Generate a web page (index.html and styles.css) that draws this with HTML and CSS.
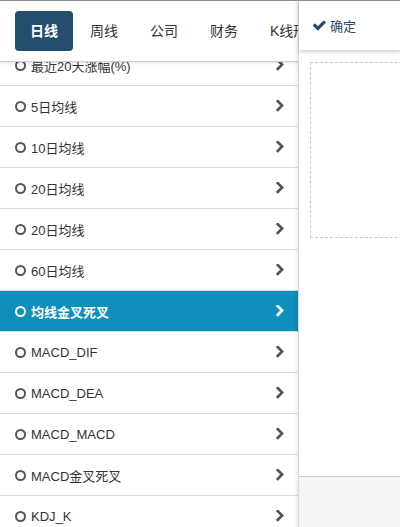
FILE: index.html
```html
<!DOCTYPE html>
<html lang="zh">
<head>
<meta charset="utf-8">
<link rel="stylesheet" href="styles.css">
</head>
<body>
<div class="page">
  <div class="tabbar">
    <div class="tab active">日线</div>
    <div class="tab">周线</div>
    <div class="tab">公司</div>
    <div class="tab">财务</div>
    <div class="tab">K线形态</div>
  </div>
  <div class="listwrap">
    <ul class="list">
      <li class="row"><span class="ring"></span><span class="label">最近20天涨幅(%)</span><svg class="chev" viewBox="340 150 1060 1500"><path d="M1363 877l-742 742q-19 19-45 19t-45-19l-166-166q-19-19-19-45t19-45l531-531-531-531q-19-19-19-45t19-45l166-166q19-19 45-19t45 19l742 742q19 19 19 45t-19 45z"/></svg></li>
      <li class="row"><span class="ring"></span><span class="label">5日均线</span><svg class="chev" viewBox="340 150 1060 1500"><path d="M1363 877l-742 742q-19 19-45 19t-45-19l-166-166q-19-19-19-45t19-45l531-531-531-531q-19-19-19-45t19-45l166-166q19-19 45-19t45 19l742 742q19 19 19 45t-19 45z"/></svg></li>
      <li class="row"><span class="ring"></span><span class="label">10日均线</span><svg class="chev" viewBox="340 150 1060 1500"><path d="M1363 877l-742 742q-19 19-45 19t-45-19l-166-166q-19-19-19-45t19-45l531-531-531-531q-19-19-19-45t19-45l166-166q19-19 45-19t45 19l742 742q19 19 19 45t-19 45z"/></svg></li>
      <li class="row"><span class="ring"></span><span class="label">20日均线</span><svg class="chev" viewBox="340 150 1060 1500"><path d="M1363 877l-742 742q-19 19-45 19t-45-19l-166-166q-19-19-19-45t19-45l531-531-531-531q-19-19-19-45t19-45l166-166q19-19 45-19t45 19l742 742q19 19 19 45t-19 45z"/></svg></li>
      <li class="row"><span class="ring"></span><span class="label">20日均线</span><svg class="chev" viewBox="340 150 1060 1500"><path d="M1363 877l-742 742q-19 19-45 19t-45-19l-166-166q-19-19-19-45t19-45l531-531-531-531q-19-19-19-45t19-45l166-166q19-19 45-19t45 19l742 742q19 19 19 45t-19 45z"/></svg></li>
      <li class="row"><span class="ring"></span><span class="label">60日均线</span><svg class="chev" viewBox="340 150 1060 1500"><path d="M1363 877l-742 742q-19 19-45 19t-45-19l-166-166q-19-19-19-45t19-45l531-531-531-531q-19-19-19-45t19-45l166-166q19-19 45-19t45 19l742 742q19 19 19 45t-19 45z"/></svg></li>
      <li class="row selected"><span class="ring"></span><span class="label">均线金叉死叉</span><svg class="chev" viewBox="340 150 1060 1500"><path d="M1363 877l-742 742q-19 19-45 19t-45-19l-166-166q-19-19-19-45t19-45l531-531-531-531q-19-19-19-45t19-45l166-166q19-19 45-19t45 19l742 742q19 19 19 45t-19 45z"/></svg></li>
      <li class="row"><span class="ring"></span><span class="label">MACD_DIF</span><svg class="chev" viewBox="340 150 1060 1500"><path d="M1363 877l-742 742q-19 19-45 19t-45-19l-166-166q-19-19-19-45t19-45l531-531-531-531q-19-19-19-45t19-45l166-166q19-19 45-19t45 19l742 742q19 19 19 45t-19 45z"/></svg></li>
      <li class="row"><span class="ring"></span><span class="label">MACD_DEA</span><svg class="chev" viewBox="340 150 1060 1500"><path d="M1363 877l-742 742q-19 19-45 19t-45-19l-166-166q-19-19-19-45t19-45l531-531-531-531q-19-19-19-45t19-45l166-166q19-19 45-19t45 19l742 742q19 19 19 45t-19 45z"/></svg></li>
      <li class="row"><span class="ring"></span><span class="label">MACD_MACD</span><svg class="chev" viewBox="340 150 1060 1500"><path d="M1363 877l-742 742q-19 19-45 19t-45-19l-166-166q-19-19-19-45t19-45l531-531-531-531q-19-19-19-45t19-45l166-166q19-19 45-19t45 19l742 742q19 19 19 45t-19 45z"/></svg></li>
      <li class="row"><span class="ring"></span><span class="label">MACD金叉死叉</span><svg class="chev" viewBox="340 150 1060 1500"><path d="M1363 877l-742 742q-19 19-45 19t-45-19l-166-166q-19-19-19-45t19-45l531-531-531-531q-19-19-19-45t19-45l166-166q19-19 45-19t45 19l742 742q19 19 19 45t-19 45z"/></svg></li>
      <li class="row"><span class="ring"></span><span class="label">KDJ_K</span><svg class="chev" viewBox="340 150 1060 1500"><path d="M1363 877l-742 742q-19 19-45 19t-45-19l-166-166q-19-19-19-45t19-45l531-531-531-531q-19-19-19-45t19-45l166-166q19-19 45-19t45 19l742 742q19 19 19 45t-19 45z"/></svg></li>
    </ul>
  </div>
  <aside class="panel">
    <div class="panel-head">
      <svg class="check" viewBox="0 300 1700 1250"><path d="M1671 566q0 40-28 68l-724 724-136 136q-28 28-68 28t-68-28l-136-136-362-362q-28-28-28-68t28-68l136-136q28-28 68-28t68 28l294 295 656-657q28-28 68-28t68 28l136 136q28 28 28 68z"/></svg>
      <span class="ok">确定</span>
    </div>
    <div class="panel-body">
      <div class="dropzone"></div>
    </div>
    <div class="panel-foot"></div>
  </aside>
</div>
</body>
</html>
```
FILE: styles.css
```css
html, body {
  margin: 0;
  padding: 0;
  height: 100%;
  overflow: hidden;
  background: #fff;
}
body {
  font-family: "Liberation Sans", "Noto Sans CJK SC", sans-serif;
  color: #333;
  border-top: 1px solid #8c8c8c;
  box-sizing: border-box;
}
.page {
  position: relative;
  height: 526px;
  overflow: hidden;
}
.tabbar {
  position: relative;
  z-index: 2;
  display: flex;
  gap: 2px;
  align-items: center;
  height: 60px;
  padding: 0 0 0 15px;
  background: #fff;
  border-bottom: 1px solid #cfcfcf;
  box-shadow: 0 1px 3px rgba(0,0,0,0.12);
  white-space: nowrap;
}
.tab {
  flex: 0 0 auto;
  padding: 0 15px;
  height: 40px;
  line-height: 40px;
  text-align: center;
  font-size: 14px;
  color: #333;
  border-radius: 4px;
}
.tab.active {
  background: #234e6c;
  color: #fff;
  font-weight: bold;
}
.listwrap {
  margin-top: -17px;
}
.list {
  list-style: none;
  margin: 0;
  padding: 0;
}
.row {
  display: flex;
  align-items: center;
  height: 40px;
  border-bottom: 1px solid #dcdcdc;
  padding: 0 14px 0 15px;
  width: 269px;
  font-size: 13px;
  color: #333;
}
.ring {
  flex: 0 0 auto;
  width: 7px;
  height: 7px;
  border: 2px solid #555;
  border-radius: 50%;
  margin-right: 5px;
}
.label {
  flex: 1;
}
.chev {
  width: 8px;
  height: 12px;
  fill: #555;
}
.row.selected {
  background: #0f8fbb;
  color: #fff;
  font-weight: bold;
}
.row.selected .ring {
  border-color: #fff;
}
.row.selected .chev {
  fill: #fff;
}
.panel {
  position: absolute;
  top: 0;
  bottom: 0;
  left: 298px;
  width: 102px;
  z-index: 3;
  display: flex;
  flex-direction: column;
  background: #fff;
  border-left: 1px solid #d8d8d8;
  box-shadow: -1px 0 4px rgba(0,0,0,0.12);
}
.panel-head {
  position: relative;
  z-index: 1;
  height: 49px;
  display: flex;
  align-items: center;
  padding-left: 13px;
  background: #fff;
  box-shadow: 0 2px 4px rgba(0,0,0,0.18);
  font-size: 13px;
  color: #2a4a66;
}
.check {
  width: 14px;
  height: 11px;
  fill: #2a4a66;
  margin-right: 4px;
}
.panel-body {
  flex: 1;
  padding: 12px 0 0 11px;
  overflow: hidden;
}
.dropzone {
  width: 200px;
  height: 174px;
  border: 1px dashed #c8c8c8;
}
.panel-foot {
  height: 50px;
  background: #f5f5f5;
  border-top: 1px solid #cccccc;
}
```
